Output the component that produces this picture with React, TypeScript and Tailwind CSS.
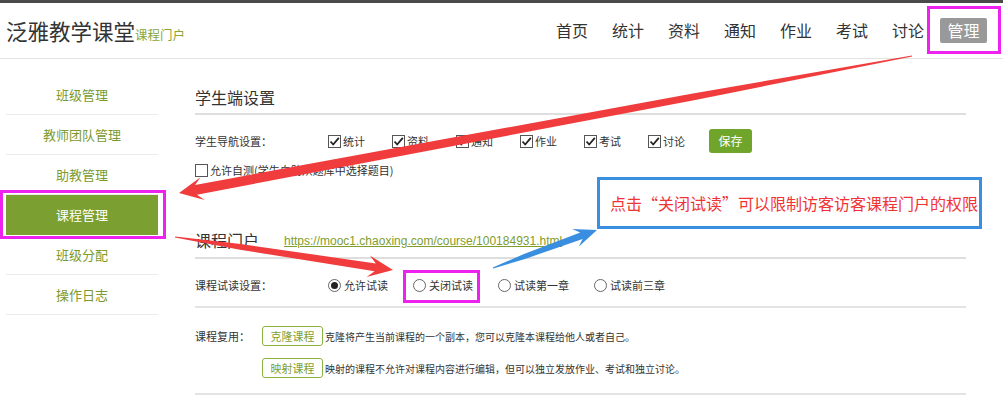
import React from 'react';

const font = { fontFamily: '"Microsoft YaHei", "Noto Sans CJK SC", "Liberation Sans", sans-serif' };

const navItems = ['首页', '统计', '资料', '通知', '作业', '考试', '讨论'];
const sideItems = ['班级管理', '教师团队管理', '助教管理', '课程管理', '班级分配', '操作日志'];
const navChecks = ['统计', '资料', '通知', '作业', '考试', '讨论'];

// tapered arrow like the screenshot tool draws
function arrow(x1: number, y1: number, x2: number, y2: number, tw: number, sw: number, hw: number, hl: number) {
  const L = Math.hypot(x2 - x1, y2 - y1);
  const ux = (x2 - x1) / L;
  const uy = (y2 - y1) / L;
  const nx = -uy;
  const ny = ux;
  const midX = x1 + ux * L * 0.3;
  const midY = y1 + uy * L * 0.3;
  const mw = sw * 0.7;
  const neckX = x2 - ux * hl * 0.72;
  const neckY = y2 - uy * hl * 0.72;
  const barbX = x2 - ux * hl;
  const barbY = y2 - uy * hl;
  const pts = [
    [x1 + (nx * tw) / 2, y1 + (ny * tw) / 2],
    [midX + (nx * mw) / 2, midY + (ny * mw) / 2],
    [neckX + (nx * sw) / 2, neckY + (ny * sw) / 2],
    [barbX + (nx * hw) / 2, barbY + (ny * hw) / 2],
    [x2, y2],
    [barbX - (nx * hw) / 2, barbY - (ny * hw) / 2],
    [neckX - (nx * sw) / 2, neckY - (ny * sw) / 2],
    [midX - (nx * mw) / 2, midY - (ny * mw) / 2],
    [x1 - (nx * tw) / 2, y1 - (ny * tw) / 2],
  ];
  return pts.map((p) => `${p[0].toFixed(1)},${p[1].toFixed(1)}`).join(' ');
}

function CheckBox({ checked }: { checked: boolean }) {
  return (
    <span className="w-[13px] h-[13px] border border-[#555] bg-white flex items-center justify-center shrink-0">
      {checked && (
        <svg width="11" height="11" viewBox="0 0 11 11">
          <path d="M1.5 5.5 L4.2 8.5 L9.8 1.8" fill="none" stroke="#222" strokeWidth="1.8" />
        </svg>
      )}
    </span>
  );
}

function Radio({ checked }: { checked: boolean }) {
  return (
    <span className="w-[13px] h-[13px] rounded-full border border-[#666] bg-white flex items-center justify-center shrink-0">
      {checked && <span className="w-[7px] h-[7px] rounded-full bg-[#222]" />}
    </span>
  );
}

export default function App() {
  return (
    <div className="relative w-[1003px] h-[398px] overflow-hidden bg-white text-[#333]" style={font}>
      {/* top strip */}
      <div className="h-[3px] bg-[#4a4a4a]" />

      {/* Header */}
      <div className="h-[56px] border-b border-[#e3e3e3] flex items-center justify-between">
        <div className="pl-[6px] flex items-baseline">
          <span className="text-[21.5px] leading-[28px] text-[#333]">泛雅教学课堂</span>
          <span className="text-[12.5px] text-[#8aa53a]">课程门户</span>
        </div>
        <div className="flex items-center gap-[24px] pr-[16px] text-[16px]">
          {navItems.map((n) => (
            <span key={n} className="leading-[25px]">{n}</span>
          ))}
          <span className="ml-[-8px] h-[25px] px-[7.5px] leading-[25px] bg-[#999] text-white rounded-[2px]">管理</span>
        </div>
      </div>

      <div className="flex">
        {/* Sidebar */}
        <div className="ml-[6px] w-[152px] pt-[16px] text-[13px]">
          {sideItems.map((s) => {
            const active = s === '课程管理';
            return (
              <div
                key={s}
                className={
                  active
                    ? 'h-[40px] flex items-center justify-center bg-[#7b9f31] text-white border-b border-[#7b9f31]'
                    : 'h-[40px] flex items-center justify-center text-[#7c9a2e] border-b border-[#ebebeb]'
                }
              >
                {s}
              </div>
            );
          })}
        </div>

        {/* Main */}
        <div className="ml-[37px] w-[771px]">
          <div className="pt-[28px] pb-[6px] text-[16px] leading-[20px] border-b-2 border-[#dedede]">学生端设置</div>

          <div className="mt-[14px] h-[24px] flex items-center text-[11px]">
            <span className="w-[133px]">学生导航设置：</span>
            {navChecks.map((c) => (
              <span key={c} className={c === '讨论' ? 'w-[61px] flex items-center gap-[2px]' : 'w-[64px] flex items-center gap-[2px]'}>
                <CheckBox checked />
                {c}
              </span>
            ))}
            <span className="w-[43px] h-[24px] rounded-[3px] bg-[#6fa52a] text-white text-[12px] flex items-center justify-center">保存</span>
          </div>

          <div className="mt-[9px] h-[16px] flex items-center gap-[2px] text-[11px]">
            <CheckBox checked={false} />
            允许自测(学生自助从题库中选择题目)
          </div>

          <div className="pt-[52px] pb-[7px] flex items-end border-b-2 border-[#dedede]">
            <span className="text-[16px] leading-[20px] w-[89px]">课程门户</span>
            <span className="text-[12px] leading-[17px] text-[#7f9d2c] underline" style={{ fontFamily: '"Liberation Sans", Arial, sans-serif' }}>
              https://mooc1.chaoxing.com/course/100184931.html
            </span>
          </div>

          <div className="pt-[16px] pb-[11px] border-b-2 border-[#e3e3e3] text-[11px]">
            <div className="h-[20px] flex items-center">
              <span className="w-[133px]">课程试读设置：</span>
              <span className="w-[85px] flex items-center gap-[3px]"><Radio checked />允许试读</span>
              <span className="w-[85px] flex items-center gap-[3px]"><Radio checked={false} />关闭试读</span>
              <span className="w-[96px] flex items-center gap-[3px]"><Radio checked={false} />试读第一章</span>
              <span className="flex items-center gap-[3px]"><Radio checked={false} />试读前三章</span>
            </div>
          </div>

          <div className="pt-[18px] pb-[15px] border-b-2 border-[#e3e3e3] text-[11px]">
            <div className="h-[20px] flex items-center">
              <span className="w-[67px]">课程复用：</span>
              <span className="w-[61px] h-[20px] border border-[#8ab33f] rounded-[3px] text-[#7fa030] flex items-center justify-center">克隆课程</span>
              <span className="ml-[2px] text-[10px]">克隆将产生当前课程的一个副本，您可以克隆本课程给他人或者自己。</span>
            </div>
            <div className="mt-[12px] h-[20px] flex items-center">
              <span className="w-[67px]" />
              <span className="w-[61px] h-[20px] border border-[#8ab33f] rounded-[3px] text-[#7fa030] flex items-center justify-center">映射课程</span>
              <span className="ml-[2px] text-[10px]">映射的课程不允许对课程内容进行编辑，但可以独立发放作业、考试和独立讨论。</span>
            </div>
          </div>
        </div>
      </div>

      {/* annotations */}
      <div className="absolute left-[597px] top-[177px] w-[385px] h-[52px] border-[3px] border-[#3b8fe0] bg-white flex items-center pl-[10px] text-[16px] text-[#f03434]">
        点击“关闭试读”可以限制访客访客课程门户的权限
      </div>
      <div className="absolute left-[927px] top-[6px] w-[74px] h-[48px] border-[3px] border-[#ee22ee]" />
      <div className="absolute left-0 top-[190px] w-[166px] h-[49px] border-[3px] border-[#ee22ee]" />
      <div className="absolute left-[403px] top-[270px] w-[77px] h-[33px] border-[3px] border-[#ee22ee]" />

      <svg className="absolute left-0 top-0 pointer-events-none" width="1003" height="398">
        <polygon points={arrow(912, 56, 179, 193, 1, 10, 23, 24)} fill="#f03c3c" />
        <polygon points={arrow(175, 237, 393, 270, 1, 8, 22, 25)} fill="#f03c3c" />
        <polygon points={arrow(493, 268, 597, 230, 1, 7, 19, 23)} fill="#3a8ee0" />
      </svg>
    </div>
  );
}
